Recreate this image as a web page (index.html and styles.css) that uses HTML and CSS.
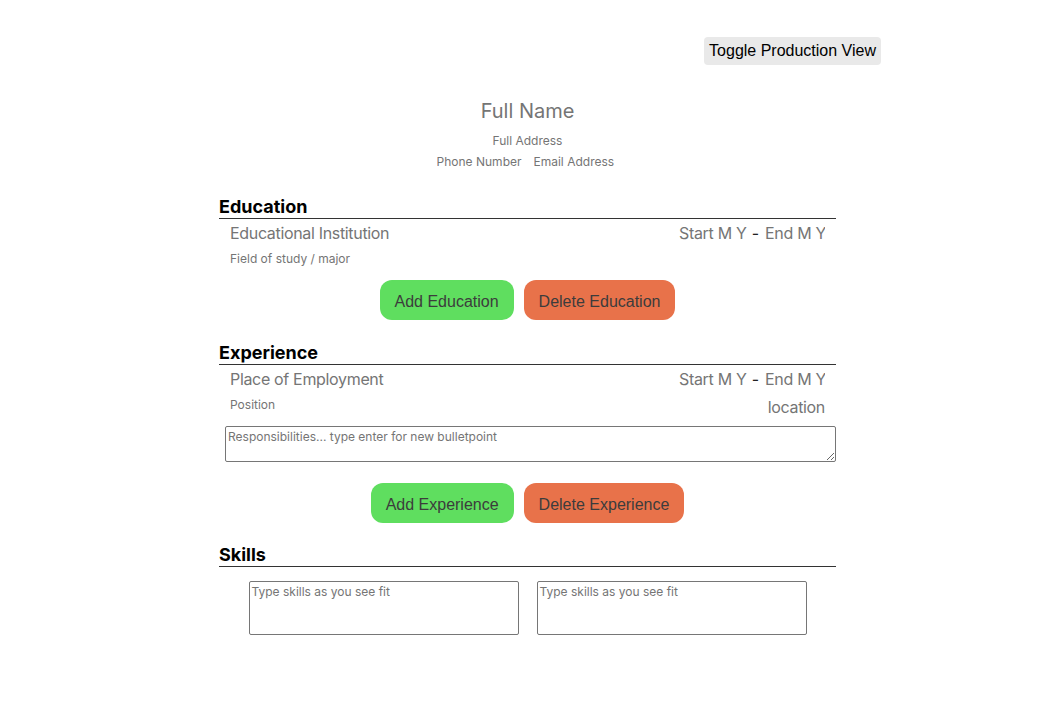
FILE: index.html
```html
<!DOCTYPE html>
<html>
<head>
<meta charset="utf-8">
<link rel="stylesheet" href="styles.css">
</head>
<body>
<div class="page">
  <div class="topbar">
    <button class="toggle">Toggle Production View</button>
  </div>
  <div class="resume">
    <header class="head">
      <input class="name" placeholder="Full Name">
      <input class="addr" placeholder="Full Address">
      <div class="contact">
        <input class="phone" placeholder="Phone Number">
        <input class="email" placeholder="Email Address">
      </div>
    </header>

    <section class="section">
      <h2 class="title">Education</h2>
      <div class="entry">
        <div class="row">
          <input class="big" placeholder="Educational Institution">
          <div class="dates"><input class="date d1" placeholder="Start M Y"><span class="dash">-</span><input class="date d2" placeholder="End M Y"></div>
        </div>
        <div class="row row2">
          <input class="small" placeholder="Field of study / major">
        </div>
      </div>
      <div class="actions">
        <button class="btn add">Add Education</button>
        <button class="btn del">Delete Education</button>
      </div>
    </section>

    <section class="section">
      <h2 class="title">Experience</h2>
      <div class="entry">
        <div class="row">
          <input class="big" placeholder="Place of Employment">
          <div class="dates"><input class="date d1" placeholder="Start M Y"><span class="dash">-</span><input class="date d2" placeholder="End M Y"></div>
        </div>
        <div class="row row2">
          <input class="small" placeholder="Position">
          <input class="big loc" placeholder="location">
        </div>
        <textarea class="resp" placeholder="Responsibilities... type enter for new bulletpoint"></textarea>
      </div>
      <div class="actions actions-exp">
        <button class="btn add">Add Experience</button>
        <button class="btn del">Delete Experience</button>
      </div>
    </section>

    <section class="section section-skills">
      <h2 class="title">Skills</h2>
      <div class="skills">
        <textarea class="skill" placeholder="Type skills as you see fit"></textarea>
        <textarea class="skill" placeholder="Type skills as you see fit"></textarea>
      </div>
    </section>
  </div>
</div>
</body>
</html>
```

FILE: styles.css
```css
* { box-sizing: border-box; }
body {
  margin: 0;
  background: #fff;
  font-family: Inter, "Noto Sans", sans-serif;
  color: #000;
}
.page {
  width: 707px;
  margin: 0 auto;
  padding-top: 37px;
}
.topbar {
  display: flex;
  justify-content: flex-end;
}
.toggle {
  height: 28px;
  padding: 0 5px;
  border: none;
  border-radius: 4px;
  background: #e9e9e9;
  font-family: "Liberation Sans", Arial, sans-serif;
  font-size: 16px;
  color: #000;
}
.resume {
  width: 617px;
  margin: 0 auto;
}
input, textarea {
  font-family: Inter, "Noto Sans", sans-serif;
  color: #333;
  background: transparent;
}
input {
  border: none;
  padding: 0;
  outline: none;
}
::placeholder { color: #757575; opacity: 1; }
.head {
  display: flex;
  flex-direction: column;
  align-items: center;
  padding-top: 34px;
}
.name {
  width: 300px;
  text-align: center;
  font-size: 20px;
  line-height: 24px;
  height: 24px;
}
.addr {
  margin-top: 10px;
  width: 300px;
  text-align: center;
  font-size: 12px;
  line-height: 16px;
  height: 16px;
}
.contact {
  margin-top: 5px;
  display: flex;
  gap: 12px;
}
.contact input {
  font-size: 12px;
  line-height: 16px;
  height: 16px;
}
.phone { width: 85px; text-align: right; }
.email { width: 85px; text-align: left; }
.section { margin-top: 22px; }
.head + .section { margin-top: 26px; }
.section-skills { margin-top: 21px; }
.title {
  margin: 0;
  font-size: 18px;
  line-height: 22px;
  font-weight: 700;
  border-bottom: 1px solid #333;
}
.entry { padding-top: 4px; }
.row {
  display: flex;
  justify-content: space-between;
  align-items: flex-start;
  padding: 0 11px;
}
.row2 { margin-top: 8px; }
.big {
  font-size: 16px;
  line-height: 20px;
  height: 20px;
  width: 250px;
  letter-spacing: -0.33px;
}
.small {
  font-size: 12px;
  line-height: 16px;
  height: 16px;
  width: 200px;
}
.loc { text-align: right; width: 120px; }
.dates {
  display: flex;
  align-items: center;
  font-size: 16px;
  line-height: 20px;
}
.date {
  font-size: 16px;
  line-height: 20px;
  height: 20px;
  letter-spacing: -0.3px;
}
.d1 { width: 69px; text-align: right; }
.d2 { width: 60px; text-align: right; }
.dash { color: #222; padding: 0 6px 0 5px; }
.resp {
  display: block;
  margin: 9px 0 0 6px;
  width: 611px;
  height: 36px;
  border: 1px solid #767676;
  border-radius: 2px;
  padding: 2px;
  font-size: 12px;
  line-height: 16px;
}
.actions {
  display: flex;
  justify-content: center;
  gap: 10px;
  margin-top: 13px;
}
.actions-exp { margin-top: 21px; }
.btn {
  height: 40px;
  padding: 3px 15px 0;
  border: none;
  border-radius: 12px;
  font-family: "Liberation Sans", Arial, sans-serif;
  font-size: 16px;
  color: #3c3c3c;
}
.add { background: #5fde5f; }
.del { background: #e8724a; }
.skills {
  display: flex;
  justify-content: center;
  gap: 18px;
  margin-top: 14px;
}
.skill {
  width: 270px;
  height: 54px;
  border: 1px solid #767676;
  border-radius: 2px;
  padding: 2px;
  font-size: 12px;
  line-height: 16px;
  resize: none;
}
```
